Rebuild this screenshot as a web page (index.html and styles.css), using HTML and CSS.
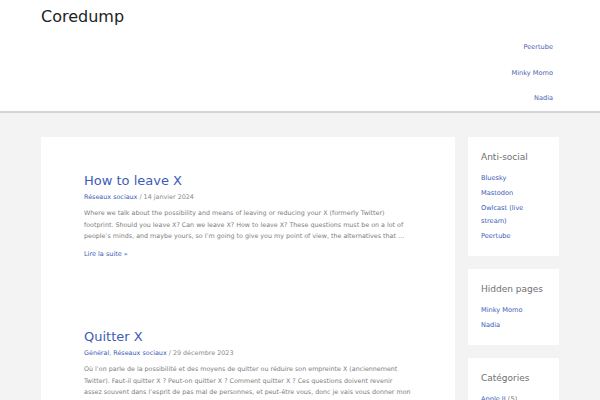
FILE: index.html
```html
<!DOCTYPE html>
<html lang="fr">
<head>
<meta charset="utf-8">
<title>Coredump</title>
<link rel="stylesheet" href="styles.css">
</head>
<body>
<header class="site-header">
  <div class="header-inner">
    <div class="site-title">Coredump</div>
    <nav class="main-nav">
      <a href="#">Peertube</a>
      <a href="#">Minky Momo</a>
      <a href="#">Nadia</a>
    </nav>
  </div>
</header>
<div class="site-content">
  <main class="content-area">
    <article class="post">
      <h2 class="post-title"><a href="#">How to leave X</a></h2>
      <div class="post-meta"><a href="#">Réseaux sociaux</a> / 14 janvier 2024</div>
      <p class="excerpt">Where we talk about the possibility and means of leaving or reducing your X (formerly Twitter) footprint. Should you leave X? Can we leave X? How to leave X? These questions must be on a lot of people’s minds, and maybe yours, so I’m going to give you my point of view, the alternatives that …</p>
      <a class="read-more" href="#">Lire la suite »</a>
    </article>
    <article class="post">
      <h2 class="post-title"><a href="#">Quitter X</a></h2>
      <div class="post-meta"><a href="#">Général</a>, <a href="#">Réseaux sociaux</a> / 29 décembre 2023</div>
      <p class="excerpt">Où l’on parle de la possibilité et des moyens de quitter ou réduire son empreinte X (anciennement Twitter). Faut-il quitter X ? Peut-on quitter X ? Comment quitter X ? Ces questions doivent revenir assez souvent dans l’esprit de pas mal de personnes, et peut-être vous, donc je vais vous donner mon point de vue, …</p>
      <a class="read-more" href="#">Lire la suite »</a>
    </article>
  </main>
  <aside class="sidebar">
    <section class="widget">
      <h3 class="widget-title">Anti-social</h3>
      <ul class="widget-list">
        <li><a href="#">Bluesky</a></li>
        <li><a href="#">Mastodon</a></li>
        <li><a href="#">Owlcast (live stream)</a></li>
        <li><a href="#">Peertube</a></li>
      </ul>
    </section>
    <section class="widget">
      <h3 class="widget-title">Hidden pages</h3>
      <ul class="widget-list">
        <li><a href="#">Minky Momo</a></li>
        <li><a href="#">Nadia</a></li>
      </ul>
    </section>
    <section class="widget">
      <h3 class="widget-title">Catégories</h3>
      <ul class="widget-list">
        <li><a href="#">Apple II</a> (5)</li>
        <li><a href="#">Général</a> (3)</li>
      </ul>
    </section>
  </aside>
</div>
</body>
</html>
```

FILE: styles.css
```css
html, body {
  margin: 0;
  padding: 0;
  overflow: hidden;
}
body {
  background: #f3f3f3;
  font-family: "DejaVu Sans", sans-serif;
  color: #3a3a3a;
}
a {
  color: #3d5cb8;
  text-decoration: none;
}
.site-header {
  background: #ffffff;
  border-bottom: 2px solid #d4d4d4;
}
.header-inner {
  width: 518px;
  margin: 0 auto;
  height: 111px;
  display: flex;
  justify-content: space-between;
  align-items: flex-start;
}
.site-title {
  font-size: 16px;
  line-height: 24px;
  padding-top: 5px;
  color: #222222;
}
.main-nav {
  display: flex;
  flex-direction: column;
  align-items: flex-end;
  padding-top: 35px;
  padding-right: 6px;
}
.main-nav a {
  font-size: 6.6px;
  line-height: 25.5px;
  color: #4a62b0;
}
.site-content {
  width: 518px;
  margin: 0 auto;
  padding-top: 24px;
  display: flex;
  gap: 13px;
  align-items: flex-start;
}
.content-area {
  width: 414px;
  background: #ffffff;
  padding: 36px 43px 40px;
  box-sizing: border-box;
}
.post + .post {
  margin-top: 69px;
}
.post-title {
  margin: 0;
  font-size: 13px;
  line-height: 16px;
  font-weight: normal;
}
.post-meta {
  margin-top: 3px;
  font-size: 6.4px;
  line-height: 10px;
  color: #8a8a8a;
}
.excerpt {
  margin: 5px 0 0;
  font-size: 6.35px;
  line-height: 11.5px;
  color: #808080;
}
.read-more {
  display: block;
  margin-top: 7px;
  font-size: 6.5px;
  line-height: 11.5px;
}
.sidebar {
  width: 91px;
  display: flex;
  flex-direction: column;
  gap: 13px;
}
.widget {
  background: #ffffff;
  padding: 13px 13px 13.5px;
}
.widget-title {
  margin: 0 0 8px;
  font-size: 9px;
  line-height: 14px;
  font-weight: normal;
  color: #707070;
}
.widget-list {
  list-style: none;
  margin: 0;
  padding: 0;
  font-size: 6.6px;
  line-height: 12.5px;
  color: #7a7a7a;
}
.widget-list li + li {
  margin-top: 2.5px;
}
```
